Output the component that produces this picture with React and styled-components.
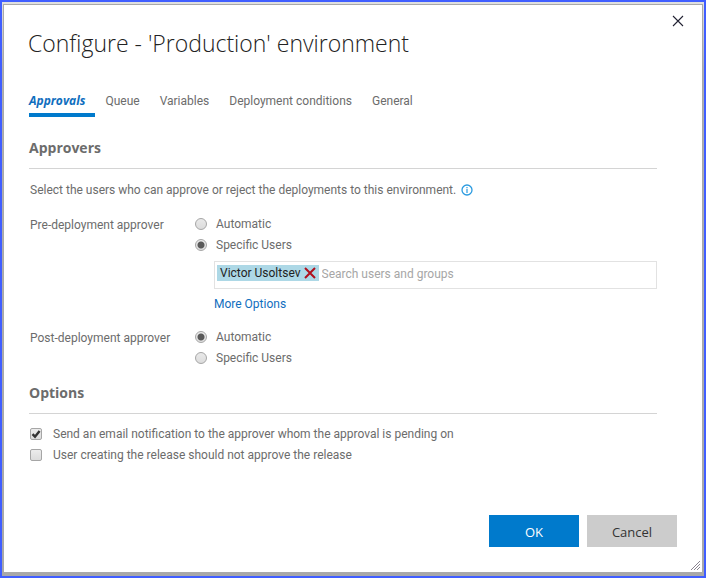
import React, { useState } from "react";
import styled, { createGlobalStyle, css } from "styled-components";

const GlobalStyle = createGlobalStyle`
  *, *::before, *::after { box-sizing: border-box; }
  body {
    margin: 0;
    background: #ffffff;
    color: #6c6c6c;
    font-family: Roboto, "Open Sans", sans-serif;
    font-size: 12px;
    line-height: 16px;
  }
  button, input { font: inherit; color: inherit; }
`;

const headingFont = `"Open Sans", "Noto Sans", sans-serif`;

const Backdrop = styled.div`
  display: flex;
  min-height: 100vh;
  padding: 2px 1px 3px;
  border: 2px solid #405eff;
  background: linear-gradient(#e0e0e0, #b0b0b0 12%, #a8a8a8);
`;

const Dialog = styled.section`
  position: relative;
  display: flex;
  flex: 1;
  flex-direction: column;
  min-width: 0;
  padding: 22px 25px 25px 24px;
  border: 1px solid #a9a9a9;
  background: #ffffff;
`;

const CloseButton = styled.button`
  position: absolute;
  top: 8px;
  right: 16px;
  display: flex;
  padding: 2px;
  border: 0;
  background: none;
  color: #222233;
  cursor: pointer;
`;

const Title = styled.h1`
  margin: 0;
  color: #222222;
  font-family: ${headingFont};
  font-size: 23px;
  font-weight: 300;
  line-height: 32px;
`;

const Tabs = styled.nav`
  display: flex;
  gap: 20px;
  margin: 34px 0 0 1px;
`;

const Tab = styled.button`
  padding: 0 0 4px;
  border: 0;
  border-bottom: 4px solid transparent;
  background: none;
  cursor: pointer;
  ${(p) =>
    p.$active &&
    css`
      padding-right: 10px;
      margin-right: -10px;
      border-color: #007acc;
      color: #106ebe;
      font-family: ${headingFont};
      font-style: italic;
      font-weight: 700;
    `}
`;

const Content = styled.div`
  padding: 0 20px 0 1px;
`;

const SectionTitle = styled.h2`
  margin: ${(p) => p.$top}px 0 0;
  padding-bottom: 10px;
  border-bottom: 1px solid #d4d4d4;
  font-family: ${headingFont};
  font-size: 14px;
  font-weight: 700;
  line-height: 20px;
`;

const Intro = styled.p`
  display: flex;
  align-items: center;
  gap: 5px;
  margin: 13px 0 18px 1px;
`;

const Field = styled.fieldset`
  display: grid;
  grid-template-columns: 165px minmax(0, 1fr);
  margin: 0 0 17px;
  padding: 0 0 0 1px;
  border: 0;
`;

const FieldLabel = styled.span`
  padding-top: 1px;
`;

const ChoiceList = styled.div`
  display: flex;
  flex-direction: column;
  gap: 5px;
`;

const Choice = styled.label`
  display: flex;
  align-items: center;
  gap: ${(p) => p.$gap}px;
`;

const Radio = styled.input.attrs({ type: "radio" })`
  appearance: none;
  width: 12px;
  height: 12px;
  margin: 0;
  border: 1px solid #a6a6a6;
  border-radius: 50%;
  background: linear-gradient(#e9e9e9, #dcdcdc);
  &:checked {
    background: radial-gradient(circle, #5a5a5a 0 3px, transparent 4px),
      linear-gradient(#ececec, #dedede);
  }
`;

const CheckHolder = styled.span`
  position: relative;
  display: flex;
`;

const Checkbox = styled.input.attrs({ type: "checkbox" })`
  appearance: none;
  width: 12px;
  height: 12px;
  margin: 0;
  border: 1px solid #a6a6a6;
  border-radius: 2px;
  background: linear-gradient(#ececec, #dcdcdc);
`;

const CheckMark = styled.svg`
  position: absolute;
  inset: 0;
  pointer-events: none;
`;

const UserBox = styled.div`
  display: flex;
  align-items: flex-start;
  margin: 3px 0 2px 19px;
  padding: 3px 2px 6px;
  border: 1px solid #e2e2e2;
`;

const UserChip = styled.span`
  display: flex;
  align-items: center;
  gap: 3px;
  padding: 0 3px;
  background: #add8e6;
  color: #222222;
`;

const ChipRemove = styled.button`
  display: flex;
  padding: 0;
  border: 0;
  background: none;
  cursor: pointer;
`;

const SearchInput = styled.input`
  flex: 1;
  min-width: 0;
  height: 16px;
  margin-top: 1px;
  padding: 0 0 0 3px;
  border: 0;
  outline: 0;
  background: none;
  &::placeholder { color: #a6a6a6; opacity: 1; }
`;

const MoreLink = styled.a`
  align-self: flex-start;
  margin-left: 19px;
  color: #106ebe;
  text-decoration: none;
`;

const OptionList = styled.div`
  display: flex;
  flex-direction: column;
  gap: 5px;
  padding: 12px 0 0 1px;
`;

const Footer = styled.footer`
  display: flex;
  justify-content: flex-end;
  gap: 8px;
  margin-top: auto;
`;

const ActionButton = styled.button`
  width: 90px;
  height: 32px;
  padding: 2px 0 0;
  border: 0;
  background: ${(p) => (p.$primary ? "#007acc" : "#cccccc")};
  color: ${(p) => (p.$primary ? "#ffffff" : "#333333")};
  font-family: ${headingFont};
  font-size: 13px;
  cursor: pointer;
`;

const ResizeGrip = styled.svg`
  position: absolute;
  right: 2px;
  bottom: 2px;
`;

function RadioRow({ name, label, checked, onSelect }) {
  return (
    <Choice $gap={9}>
      <Radio name={name} checked={checked} onChange={onSelect} />
      {label}
    </Choice>
  );
}

function CheckRow({ label, initial }) {
  const [on, setOn] = useState(initial);
  return (
    <Choice $gap={11}>
      <CheckHolder>
        <Checkbox checked={on} onChange={() => setOn(!on)} />
        {on && (
          <CheckMark width="12" height="12" viewBox="0 0 12 12">
            <path d="M2.5 6.2 L5 8.7 L9.6 3" fill="none" stroke="#333" strokeWidth="2.4" />
          </CheckMark>
        )}
      </CheckHolder>
      {label}
    </Choice>
  );
}

const tabs = ["Approvals", "Queue", "Variables", "Deployment conditions", "General"];

export default function App() {
  const [tab, setTab] = useState("Approvals");
  const [pre, setPre] = useState("users");
  const [post, setPost] = useState("auto");

  return (
    <>
      <GlobalStyle />
      <Backdrop>
        <Dialog role="dialog" aria-labelledby="dialog-title">
          <CloseButton aria-label="Close">
            <svg width="12" height="12" viewBox="0 0 12 12">
              <path d="M1 1 L11 11 M11 1 L1 11" stroke="currentColor" strokeWidth="1.1" />
            </svg>
          </CloseButton>
          <Title id="dialog-title">Configure - 'Production' environment</Title>
          <Tabs>
            {tabs.map((name) => (
              <Tab key={name} $active={name === tab} onClick={() => setTab(name)}>
                {name}
              </Tab>
            ))}
          </Tabs>
          <Content>
            <SectionTitle $top={21}>Approvers</SectionTitle>
            <Intro>
              Select the users who can approve or reject the deployments to this environment.
              <svg width="12" height="12" viewBox="0 0 12 12" aria-hidden="true">
                <circle cx="6" cy="6" r="5" fill="none" stroke="#2b9be0" strokeWidth="1.3" />
                <path d="M6 5 V9 M6 3 V4.2" stroke="#2b9be0" strokeWidth="1.2" />
              </svg>
            </Intro>
            <Field aria-label="Pre-deployment approver">
              <FieldLabel>Pre-deployment approver</FieldLabel>
              <ChoiceList>
                <RadioRow name="pre" label="Automatic" checked={pre === "auto"} onSelect={() => setPre("auto")} />
                <RadioRow name="pre" label="Specific Users" checked={pre === "users"} onSelect={() => setPre("users")} />
                <UserBox>
                  <UserChip>
                    Victor Usoltsev
                    <ChipRemove aria-label="Remove Victor Usoltsev">
                      <svg width="12" height="12" viewBox="0 0 12 12">
                        <path d="M1 1 L11 11 M11 1 L1 11" stroke="#b0101c" strokeWidth="2" />
                      </svg>
                    </ChipRemove>
                  </UserChip>
                  <SearchInput aria-label="Search users and groups" placeholder="Search users and groups" />
                </UserBox>
                <MoreLink href="#more">More Options</MoreLink>
              </ChoiceList>
            </Field>
            <Field aria-label="Post-deployment approver">
              <FieldLabel>Post-deployment approver</FieldLabel>
              <ChoiceList>
                <RadioRow name="post" label="Automatic" checked={post === "auto"} onSelect={() => setPost("auto")} />
                <RadioRow name="post" label="Specific Users" checked={post === "users"} onSelect={() => setPost("users")} />
              </ChoiceList>
            </Field>
            <SectionTitle $top={16}>Options</SectionTitle>
            <OptionList>
              <CheckRow label="Send an email notification to the approver whom the approval is pending on" initial={true} />
              <CheckRow label="User creating the release should not approve the release" initial={false} />
            </OptionList>
          </Content>
          <Footer>
            <ActionButton $primary>OK</ActionButton>
            <ActionButton>Cancel</ActionButton>
          </Footer>
          <ResizeGrip width="10" height="10" viewBox="0 0 10 10" aria-hidden="true">
            <path d="M1 10 L10 1 M4 10 L10 4 M7 10 L10 7" stroke="#8a8490" strokeWidth="1" />
          </ResizeGrip>
        </Dialog>
      </Backdrop>
    </>
  );
}
